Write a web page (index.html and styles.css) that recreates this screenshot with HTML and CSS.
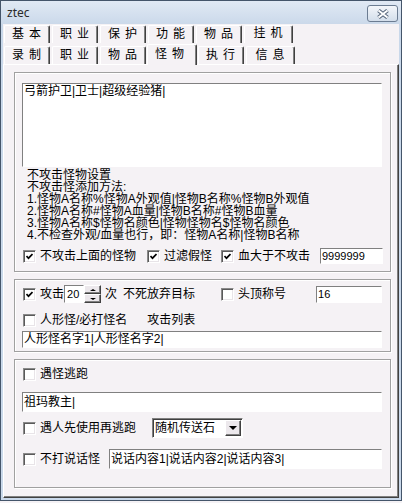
FILE: index.html
```html
<!DOCTYPE html>
<html lang="zh">
  <head>
    <meta charset="utf-8">
    <link rel="stylesheet" href="styles.css">
  </head>
  <body>
    <div class="window">
      <div class="titlebar">
        <span class="title">ztec</span>
        <div class="close">
          <svg width="14" height="10" viewBox="0 0 14 10">
            <path d="M2.5 1.5L11.5 8.5M11.5 1.5L2.5 8.5" stroke="#56667b" stroke-width="4" />
            <path d="M2.5 1.5L11.5 8.5M11.5 1.5L2.5 8.5" stroke="#fff" stroke-width="2" />
          </svg>
        </div>
      </div>

      <div class="client">
        <div class="tabrow">
          <div class="tab">基本</div>
          <div class="tab">职业</div>
          <div class="tab">保护</div>
          <div class="tab">功能</div>
          <div class="tab">物品</div>
          <div class="tab last up">挂机</div>
        </div>
        <div class="tabrow second">
          <div class="tab">录制</div>
          <div class="tab">职业</div>
          <div class="tab">物品</div>
          <div class="tab active">怪物</div>
          <div class="tab">执行</div>
          <div class="tab last">信息</div>
        </div>

        <div class="panel">
          <!-- 不攻击怪物 -->
          <div class="group g1">
            <div class="field memo">弓箭护卫|卫士|超级经验猪|</div>
            <div class="notes">
              <div>不攻击怪物设置</div>
              <div>不攻击怪添加方法:</div>
              <div>1.怪物A名称%怪物A外观值|怪物B名称%怪物B外观值</div>
              <div>2.怪物A名称#怪物A血量|怪物B名称#怪物B血量</div>
              <div>3.怪物A名称$怪物名颜色|怪物怪物名$怪物名颜色</div>
              <div>4.不检查外观/血量也行，即：怪物A名称|怪物B名称</div>
            </div>
            <div class="row r-filter">
              <span class="cb on"><svg width="7" height="7" viewBox="0 0 7 7"><path d="M0.5 3L2.5 5.2L6.5 1" /></svg></span>
              <span class="lbl w96">不攻击上面的怪物</span>
              <span class="cb on"><svg width="7" height="7" viewBox="0 0 7 7"><path d="M0.5 3L2.5 5.2L6.5 1" /></svg></span>
              <span class="lbl w48">过滤假怪</span>
              <span class="cb on"><svg width="7" height="7" viewBox="0 0 7 7"><path d="M0.5 3L2.5 5.2L6.5 1" /></svg></span>
              <span class="lbl w72">血大于不攻击</span>
              <div class="field num hp">9999999</div>
            </div>
          </div>

          <!-- 攻击 -->
          <div class="group g2">
            <div class="row r-attack">
              <span class="cb on"><svg width="7" height="7" viewBox="0 0 7 7"><path d="M0.5 3L2.5 5.2L6.5 1" /></svg></span>
              <span class="lbl">攻击</span>
              <div class="field num count">20</div>
              <div class="spin">
                <span class="spin-btn"><i class="arr-up"></i></span>
                <span class="spin-btn"><i class="arr-down"></i></span>
              </div>
              <span class="lbl times">次</span>
              <span class="lbl giveup">不死放弃目标</span>
              <span class="cb"></span>
              <span class="lbl">头顶称号</span>
              <div class="field num title-no">16</div>
            </div>
            <div class="row r-human">
              <span class="cb"></span>
              <span class="lbl">人形怪/必打怪名</span>
              <span class="lbl attack-list">攻击列表</span>
            </div>
            <div class="field line short">人形怪名字1|人形怪名字2|</div>
          </div>

          <!-- 逃跑 -->
          <div class="group g3">
            <div class="row r-flee">
              <span class="cb"></span>
              <span class="lbl">遇怪逃跑</span>
            </div>
            <div class="field line">祖玛教主|</div>
            <div class="row r-item">
              <span class="cb"></span>
              <span class="lbl w96">遇人先使用再逃跑</span>
              <div class="select">
                <span class="select-text">随机传送石</span>
                <span class="select-btn"><i class="arr-down big"></i></span>
              </div>
            </div>
            <div class="row r-talk">
              <span class="cb"></span>
              <span class="lbl">不打说话怪</span>
              <div class="field talk">说话内容1|说话内容2|说话内容3|</div>
            </div>
          </div>
        </div>
      </div>
    </div>
  </body>
</html>
```

FILE: styles.css
```css
body {
  margin: 0;
  background: #f5f2f5;
  font-family: "Liberation Sans", "Noto Sans CJK SC", sans-serif;
  font-size: 12px;
  color: #000;
}

.window {
  width: 402px;
  height: 501px;
  box-sizing: border-box;
  border: 1px solid #44556a;
  background: #c9d8ea;
  display: flex;
  flex-direction: column;
}

.titlebar {
  height: 23px;
  flex: none;
  display: flex;
  align-items: center;
  justify-content: space-between;
  padding: 0 3px 0 6px;
  background: linear-gradient(#e0e9f4, #cbd9ea);
}

.title {
  font-family: "Noto Sans", sans-serif;
  font-size: 12px;
  color: #2a2a2a;
}

.close {
  width: 31px;
  height: 17px;
  box-sizing: border-box;
  margin-top: 2px;
  border: 1px solid #6b7c92;
  border-radius: 3px;
  background: linear-gradient(#f3f6fa, #d3deeb);
  display: flex;
  align-items: center;
  justify-content: center;
}

.client {
  flex: 1;
  margin: 0 2px 2px;
  padding-top: 1px;
  background: #f5f2f5;
  display: flex;
  flex-direction: column;
}

/* tabs */
.tabrow {
  display: flex;
  gap: 2px;
  height: 18px;
  padding-left: 1px;
  flex: none;
}

.tabrow.second {
  margin-top: 3px;
}

.tab {
  width: 46px;
  height: 18px;
  box-sizing: border-box;
  border-top: 1px solid #fff;
  border-left: 1px solid #fff;
  border-right: 1px solid #404040;
  box-shadow: inset -1px 0 0 #808080;
  border-radius: 2px 2px 0 0;
  text-align: center;
  line-height: 17px;
  letter-spacing: 5px;
  padding-left: 4px;
  background: #f5f2f5;
}

.tab.last {
  width: 49px;
}

.tab.up {
  line-height: 14px;
}

.tab.active {
  position: relative;
  z-index: 1;
  width: 50px;
  height: 21px;
  margin: -2px -1px 0 -1px;
  line-height: 18px;
  padding-left: 0;
}

.panel {
  flex: 1;
  box-sizing: border-box;
  border: 1px solid;
  border-color: #fff #404040 #404040 #fff;
  box-shadow: inset -1px -1px 0 #808080;
  padding: 7px 7px 0 10px;
}

/* group boxes */
.group {
  border: 1px solid #a0a0a0;
  box-shadow: 1px 1px 0 #fff, inset 1px 1px 0 #fff;
  padding: 0 7px;
}

.group + .group {
  margin-top: 7px;
}

.g1 {
  padding-top: 10px;
  padding-bottom: 7px;
}

.g2 {
  padding-top: 5px;
  padding-bottom: 3px;
}

.g3 {
  padding-top: 6px;
  padding-bottom: 18px;
}

.field {
  box-sizing: border-box;
  background: #fff;
  border: 1px solid;
  border-color: #808080 #fff #fff #808080;
  white-space: nowrap;
  overflow: hidden;
}

.memo {
  width: 360px;
  height: 84px;
  line-height: 14px;
  padding: 0 1px;
}

.notes {
  margin-top: 2px;
  padding-left: 5px;
  line-height: 12px;
}

.row {
  display: flex;
  align-items: center;
  height: 16px;
  padding-left: 1px;
}

.cb {
  width: 13px;
  height: 13px;
  box-sizing: border-box;
  flex: none;
  border: 1px solid;
  border-color: #8a8a8a #fff #fff #8a8a8a;
  box-shadow: inset 1px 1px 0 #5a5a5a, inset -1px -1px 0 #e8e4e8;
  background: #fff;
  display: flex;
  align-items: center;
  justify-content: center;
  margin-right: 4px;
}

.cb svg path {
  fill: none;
  stroke: #000;
  stroke-width: 1.7;
}

.lbl {
  white-space: nowrap;
  line-height: 16px;
}

.w96 { width: 96px; }
.w72 { width: 72px; }
.w48 { width: 48px; }

.r-filter {
  margin-top: 7px;
}

.r-filter .w96 { margin-right: 11px; }
.r-filter .w48 { margin-right: 9px; }
.r-filter .w72 { margin-right: 10px; }

.num {
  font-size: 11px;
  line-height: 14px;
  padding-left: 1px;
}

.hp {
  width: 64px;
  height: 16px;
}

.r-attack {
  height: 18px;
}

.r-attack .lbl:first-of-type {
  width: 24px;
  margin-right: 2px;
}

.count {
  width: 20px;
  height: 18px;
  line-height: 16px;
  padding-left: 2px;
}

.spin {
  width: 17px;
  height: 18px;
  display: flex;
  flex-direction: column;
  margin-right: 4px;
}

.spin-btn {
  flex: 1;
  box-sizing: border-box;
  border: 1px solid;
  border-color: #fff #404040 #404040 #fff;
  box-shadow: inset -1px -1px 0 #808080;
  background: #ece8ec;
  display: flex;
  align-items: center;
  justify-content: center;
}

.arr-up,
.arr-down {
  width: 0;
  height: 0;
  border-left: 3px solid transparent;
  border-right: 3px solid transparent;
}

.arr-up {
  border-bottom: 2px solid #000;
}

.arr-down {
  border-top: 2px solid #000;
}

.arr-down.big {
  border-left-width: 4px;
  border-right-width: 4px;
  border-top-width: 4px;
}

.times {
  margin-right: 6px;
}

.giveup {
  margin-right: 26px;
}

.title-no {
  width: 66px;
  height: 17px;
  margin-left: 30px;
}

.r-human {
  margin-top: 9px;
}

.attack-list {
  margin-left: 20px;
}

.line {
  width: 360px;
  height: 20px;
  line-height: 18px;
  padding: 0 1px;
}

.line.short {
  height: 17px;
  line-height: 15px;
  margin-top: 3px;
}

.g3 .line {
  margin-top: 10px;
}

.r-item {
  height: 20px;
  margin-top: 6px;
}

.select {
  width: 91px;
  height: 20px;
  box-sizing: border-box;
  margin-left: 16px;
  border: 1px solid;
  border-color: #808080 #fff #fff #808080;
  box-shadow: inset 1px 1px 0 #404040;
  background: #fff;
  display: flex;
  align-items: center;
  padding: 1px 1px 1px 2px;
}

.select-text {
  flex: 1;
  line-height: 16px;
}

.select-btn {
  width: 16px;
  height: 16px;
  box-sizing: border-box;
  border: 1px solid;
  border-color: #fff #404040 #404040 #fff;
  box-shadow: inset -1px -1px 0 #808080;
  background: #ece8ec;
  display: flex;
  align-items: center;
  justify-content: center;
}

.r-talk {
  height: 20px;
  margin-top: 11px;
}

.talk {
  width: 273px;
  height: 20px;
  line-height: 18px;
  margin-left: 9px;
  padding: 0 1px;
}
```
